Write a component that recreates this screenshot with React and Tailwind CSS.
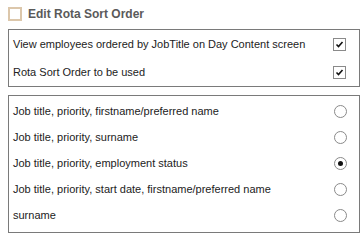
import React from 'react';

const toggles = [
  'View employees ordered by JobTitle on Day Content screen',
  'Rota Sort Order to be used',
];

const sortOptions = [
  'Job title, priority, firstname/preferred name',
  'Job title, priority, surname',
  'Job title, priority, employment status',
  'Job title, priority, start date, firstname/preferred name',
  'surname',
];

const CheckBox = () => (
  <span className="w-[13px] h-[13px] border border-[#8a8a8a] bg-white flex items-center justify-center">
    <svg width="9" height="9" viewBox="0 0 9 9">
      <path d="M1.5 4.5 L3.5 6.5 L7.5 2" fill="none" stroke="#111" strokeWidth="1.6" />
    </svg>
  </span>
);

const Radio = ({ checked }) => (
  <span className="w-[13px] h-[13px] rounded-full border border-[#8a8a8a] bg-white flex items-center justify-center">
    {checked && <span className="w-[5px] h-[5px] rounded-full bg-[#111]" />}
  </span>
);

export default function App() {
  const selected = 2;

  return (
    <div className="w-[362px] h-[240px] bg-white pl-2 pr-[2px] pt-[7px] font-['Liberation_Sans',sans-serif] text-[#222]">
      <div className="flex items-center gap-[6px] h-[14px]">
        <span className="w-[14px] h-[14px] border-2 border-[#dcc7ab] bg-white" />
        <span className="text-[12px] font-bold text-[#5a5a5a]">Edit Rota Sort Order</span>
      </div>

      <div className="mt-[8px] border border-[#7a7a7a]">
        {toggles.map((label) => (
          <div key={label} className="h-[28px] flex items-center justify-between pl-[4px] pr-[13px] text-[11px]">
            <span>{label}</span>
            <CheckBox />
          </div>
        ))}
      </div>

      <div className="mt-[8px] border border-[#7a7a7a] pt-[2px] pb-[4px]">
        {sortOptions.map((label, i) => (
          <div key={label} className="h-[26px] flex items-center justify-between pl-[4px] pr-[12px] text-[11px]">
            <span>{label}</span>
            <Radio checked={i === selected} />
          </div>
        ))}
      </div>
    </div>
  );
}
